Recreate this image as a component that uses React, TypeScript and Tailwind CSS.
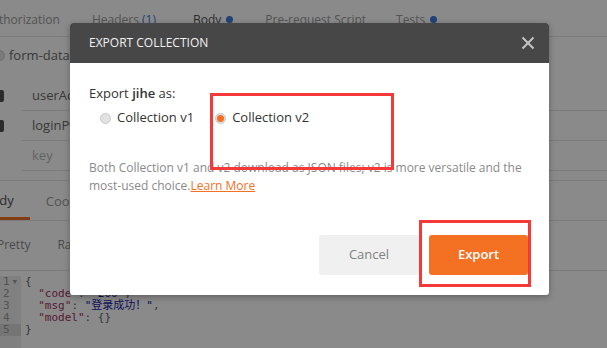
import React from 'react';

const font = { fontFamily: '"Open Sans", "Noto Sans CJK SC", sans-serif' };
const mono = { fontFamily: '"DejaVu Sans Mono", "Noto Sans CJK SC", monospace' };

const Radio = ({ checked }: { checked?: boolean }) => (
  <span className="flex h-[11px] w-[11px] items-center justify-center rounded-full border border-[#c8c8c8] bg-[#e2e2e2]">
    {checked && <span className="h-[7px] w-[7px] rounded-full bg-[#f47023]" />}
  </span>
);

const App = () => {
  return (
    <div className="relative h-[348px] w-[607px] overflow-hidden bg-white text-[13px]" style={font}>
      {/* request tabs */}
      <div className="flex h-[37px] items-center overflow-hidden border-b border-[#e3e3e3] pt-[3px] text-[12px] text-[#9a9a9a]">
        <span className="-ml-[16px] shrink-0">Authorization</span>
        <span className="ml-[32px] shrink-0">
          Headers <span className="text-[#3b7ad9]">(1)</span>
        </span>
        <span className="ml-[37px] flex shrink-0 items-center gap-[5px] text-[#505050]">
          Body <span className="h-[7px] w-[7px] rounded-full bg-[#3b7ad9]" />
        </span>
        <span className="ml-[32px] shrink-0">Pre-request Script</span>
        <span className="ml-[30px] flex shrink-0 items-center gap-[5px]">
          Tests <span className="h-[7px] w-[7px] rounded-full bg-[#3b7ad9]" />
        </span>
      </div>

      {/* body type */}
      <div className="flex h-[44px] items-start gap-[4px] pt-[9px] text-[#6a6a6a]">
        <span className="-ml-[6px] mt-[4px] h-[11px] w-[11px] rounded-full border border-[#c8c8c8] bg-[#e2e2e2]" />
        <span>form-data</span>
      </div>

      {/* key / value rows */}
      <div className="flex flex-col">
        {['userAccount', 'loginPwd', 'key'].map((k, i) => (
          <div key={k} className="flex h-[30px] items-center">
            <span className={`-ml-[8px] h-[12px] w-[12px] rounded-[2px] ${i < 2 ? 'bg-[#505050]' : ''}`} />
            <div className={`ml-[18px] flex h-full flex-1 items-center border-b border-[#e3e3e3] pl-[10px] ${i < 2 ? 'text-[#6a6a6a]' : 'text-[#b8b8b8]'}`}>
              {k}
            </div>
          </div>
        ))}
      </div>
      <div className="h-[10px] border-b border-[#e3e3e3]" />

      {/* response tabs */}
      <div className="flex h-[40px] items-end gap-[16px] border-b border-[#e3e3e3] text-[#9a9a9a]">
        <span className="-ml-[17px] flex h-full items-center border-b-[3px] border-[#f47023] pt-[3px] pr-[16px] text-[#505050]">
          Body
        </span>
        <span className="flex h-full items-center pt-[3px]">Cookies</span>
      </div>

      <div className="flex h-[50px] items-center gap-[27px] border-b border-[#e3e3e3] pb-[2px] text-[12px] text-[#8a8a8a]">
        <span className="-ml-[3px]">Pretty</span>
        <span>Raw</span>
      </div>

      {/* code */}
      <div className="flex pt-[5px] text-[11px] leading-[12px]" style={mono}>
        <div className="w-[21px] bg-[#ececec] text-[#9a9a9a]">
          {[1, 2, 3, 4, 5].map((n) => (
            <div key={n} className={`flex h-[12px] items-center pl-[3px] ${n === 5 ? 'bg-[#d8d8d8]' : ''}`}>
              <span>{n}</span>
              {n === 1 && <span className="ml-[3px] text-[7px]">▼</span>}
            </div>
          ))}
          <div className="h-[40px]" />
        </div>
        <div className="whitespace-pre pl-[4px] text-[#666]">
          <div>{'{'}</div>
          <div>
            {'  '}
            <span className="text-[#a1315f]">"code"</span>: <span className="text-[#1a1aa6]">"200"</span>,
          </div>
          <div>
            {'  '}
            <span className="text-[#a1315f]">"msg"</span>: <span className="text-[#1a1aa6]">"登录成功！"</span>,
          </div>
          <div>
            {'  '}
            <span className="text-[#a1315f]">"model"</span>: {'{}'}
          </div>
          <div>{'}'}</div>
        </div>
      </div>

      {/* backdrop */}
      <div className="absolute inset-0 bg-black/[0.46]" />

      {/* modal */}
      <div className="absolute left-[70px] top-[23px] w-[479px] overflow-hidden rounded-[3px] bg-white shadow-[0_2px_6px_rgba(0,0,0,0.3)]">
        <div className="flex h-[40px] items-center justify-between bg-[#474747] pl-[19px] pr-[14px]">
          <span className="text-[12px] text-[#f2f2f2]">EXPORT COLLECTION</span>
          <svg width="14" height="14" viewBox="0 0 14 14" className="text-[#c4c4c4]">
            <path d="M1.5 1.5 L12.5 12.5 M12.5 1.5 L1.5 12.5" stroke="currentColor" strokeWidth="2" />
          </svg>
        </div>
        <div className="pl-[19px] pr-[21px] pt-[20px] pb-[20px]">
          <div className="text-[13px] leading-[20px] text-[#333]">
            Export <span className="font-semibold">jihe</span> as:
          </div>
          <div className="mt-[5px] flex h-[20px] items-center pl-[11px] text-[13px] text-[#333]">
            <Radio />
            <span className="ml-[6px]">Collection v1</span>
            <span className="ml-[21px]">
              <Radio checked />
            </span>
            <span className="ml-[6px]">Collection v2</span>
          </div>
          <p className="mt-[31px] text-[12px] leading-[18px] text-[#8a8a8a]">
            Both Collection v1 and v2 download as JSON files; v2 is more versatile and the most-used choice.
            <a className="text-[#f47023] underline">Learn More</a>
          </p>
          <div className="mt-[40px] flex justify-end gap-[10px]">
            <button className="h-[40px] w-[100px] rounded-[3px] bg-[#f0f0f0] text-[13px] text-[#808080]">Cancel</button>
            <button className="h-[40px] w-[99px] rounded-[3px] bg-[#f47023] text-[13px] font-semibold text-white">Export</button>
          </div>
        </div>
      </div>

      {/* annotation boxes */}
      <div className="absolute left-[210px] top-[93px] h-[77px] w-[184px] border-[3px] border-[#f53838]" />
      <div className="absolute left-[419px] top-[220px] h-[67px] w-[112px] border-[3px] border-[#f53838]" />
    </div>
  );
};

export default App;
